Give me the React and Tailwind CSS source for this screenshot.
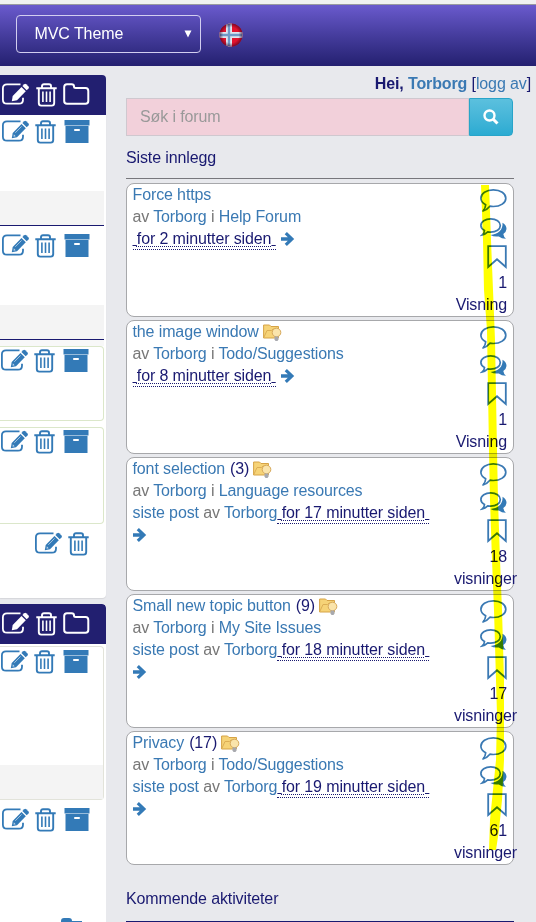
import React from "react";

const link = "text-[#3a79b3]";

function Edit({ className = "" }) {
  return (
    <svg className={"block shrink-0 " + className} width="28" height="24" viewBox="0 0 28 24" fill="none" stroke="currentColor">
      <path d="M18.500 1.300H5Q.9 1.300 .9 5.300V16.700Q.9 20.700 5 20.700H17Q21 20.700 21 16.700V14.800" strokeWidth="1.800" />
      <path d="M9.800 18.300L10.700 12.900L19.500 4L23.800 8.200L15 17.200Z" fill="currentColor" stroke="none" />
      <path d="M20.400 3L22.200 1.200Q23.200 .3 24.200 1.200L26.500 3.500Q27.400 4.500 26.500 5.500L24.700 7.200Z" fill="currentColor" stroke="none" />
      <path d="M13.300 12.800L19.600 6.400" stroke="white" strokeWidth=".8" opacity=".7" />
      <path d="M11.800 14.300L13.700 16.200L11.600 16.700Z" fill="white" stroke="none" opacity=".7" />
    </svg>
  );
}
function Trash() {
  return (
    <svg className="block shrink-0" width="21" height="24" viewBox="0 0 21 24" fill="none" stroke="currentColor">
      <path d="M.3 5.200H20.700M6 5V3Q6 1.200 8 1.200H13Q15 1.200 15 3V5M2.800 5V20Q2.800 22.600 5.300 22.600H15.700Q18.200 22.600 18.200 20V5" strokeWidth="1.900" />
      <path d="M6.900 8.500V19M10.500 8.500V19M14.100 8.500V19" strokeWidth="1.600" />
    </svg>
  );
}
function Folder() {
  return (
    <svg className="block shrink-0" width="27" height="24" viewBox="0 0 27 24" fill="none" stroke="currentColor" strokeWidth="2">
      <path d="M1.200 4Q1.200 1.200 4 1.200H8.500Q11 1.200 11 3.500Q11 5 12.800 5H22.500Q25.300 5 25.300 8V18Q25.300 20.800 22.500 20.800H4Q1.200 20.800 1.200 18Z" />
    </svg>
  );
}
function Archive() {
  return (
    <svg className="block shrink-0" width="26" height="24" viewBox="0 0 26 24">
      <path d="M.5 0H25.500V5.500H.5ZM1.500 6H24.500V23H1.500Z" fill="currentColor" />
      <rect x="10" y="9" width="6" height="1.900" rx=".9" fill="white" />
    </svg>
  );
}
function Tools({ shift = "pl-0.5", kind = "archive" }) {
  return (
    <div className={"flex h-6 text-[#337ab7] " + shift}>
      <Edit />
      <div className="ml-[5px]"><Trash /></div>
      {kind === "archive" && <div className="ml-2"><Archive /></div>}
    </div>
  );
}
function SectionHead() {
  return (
    <div className="flex h-10 rounded-tr bg-[#221f70] pl-0.5 pt-2 text-white">
      <Edit className="text-white" />
      <div className="ml-1.5"><Trash /></div>
      <div className="ml-[6px]"><Folder /></div>
    </div>
  );
}

function Comment() {
  return (
    <svg className="block" width="27" height="23" viewBox="0 0 27 23" fill="none" stroke="#3a79b3" strokeWidth="1.7">
      <path d="M13.300 .9C20.500 .9 25.800 4.500 25.800 9.200S20.500 17.500 13.300 17.500Q11.500 17.500 9.900 17.200Q7 20.800 3 22Q5.500 19.300 5.700 15.700C2.600 14.100 .9 11.900 .9 9.200C.9 4.500 6.300 .9 13.300 .9Z" strokeLinejoin="round" />
    </svg>
  );
}
function Comments() {
  return (
    <svg className="block" width="27" height="21" viewBox="0 0 27 21">
      <path d="M22.500 4.800Q26.600 7.300 26.500 11Q26.300 14 23.300 16Q23.600 18.700 26 20.700Q21.500 20.500 18.800 18.400Q14 19.200 10.500 16.900C18 16.500 23.200 12 22.500 4.800Z" fill="#337ab7" />
      <path d="M10.700 .9C16.200 .9 20.300 3.700 20.300 7.500S16.200 14.200 10.700 14.200Q9.200 14.200 7.800 13.900Q5.300 16.300 2.300 16.900Q4.400 15 4.500 12.500Q.9 10.500 .9 7.500C.9 3.700 5.300 .9 10.700 .9Z" fill="none" stroke="#3a79b3" strokeWidth="1.7" />
    </svg>
  );
}
function Bookmark() {
  return (
    <svg className="block" width="20" height="24" viewBox="0 0 20 24" fill="none" stroke="#3a79b3" strokeWidth="1.8">
      <path d="M1.200 1.200H18.800V22L10 14.300L1.200 22Z" />
    </svg>
  );
}
function Arrow() {
  return (
    <svg className="block" width="14" height="14" viewBox="0 0 14 14">
      <path d="M0 5.200H6.800L3.700 2.200L5.900 0L13.200 7L5.900 14L3.700 11.800L6.800 8.800H0Z" fill="#337ab7" />
    </svg>
  );
}
function Tip() {
  return (
    <svg className="ml-1 block" width="19" height="19" viewBox="0 0 19 19">
      <path d="M.6 15V2H6.500L8 3.500H15.500V15Z" fill="#f6d377" stroke="#d6a346" />
      <path d="M1 14L4 7.500H8.500L10 6H15.500" fill="none" stroke="#dcae55" />
      <circle cx="13.500" cy="9.500" r="4.300" fill="#fae4ab" stroke="#d6a85a" />
      <path d="M11.500 13.500H15.500V16.500L14.500 18H12.500L11.500 16.500Z" fill="#a8a9ae" />
    </svg>
  );
}

const posts = [
  { title: "Force https", forum: "Help Forum", time: "for 2 minutter siden", views: "1" },
  { title: "the image window", forum: "Todo/Suggestions", time: "for 8 minutter siden", views: "1", tip: true },
  { title: "font selection", n: "(3)", forum: "Language resources", time: "for 17 minutter siden", views: "18", tip: true, last: true },
  { title: "Small new topic button", n: "(9)", forum: "My Site Issues", time: "for 18 minutter siden", views: "17", tip: true, last: true },
  { title: "Privacy", n: "(17)", forum: "Todo/Suggestions", time: "for 19 minutter siden", views: "61", tip: true, last: true },
];

function Post({ p }) {
  return (
    <article className="flex h-[134px] w-[388px] justify-between rounded-lg border border-[#a7a8ab] bg-white pl-[5.500px] pr-[6px] leading-[22px]">
      <div className="whitespace-nowrap">
        <div className="flex h-[22px] items-center">
          <a className={link}>{p.title}</a>
          {p.n && <span className="ml-[5px]">{p.n}</span>}
          {p.tip && <Tip />}
        </div>
        <div className="h-[22px] text-[#777]">av <a className={link}>Torborg</a> i <a className={link}>{p.forum}</a></div>
        <div className="flex h-[22px]">
          {p.last && <span className="text-[#777]"><a className={link}>siste post</a> av <a className={link}>Torborg</a></span>}
          <span className="h-[22px] whitespace-pre border-b border-dotted border-[#191970]">
            <span className="underline"> </span>
            <span className="underline decoration-dotted decoration-1 underline-offset-2">{p.time}</span>
            <span className="underline"> </span>
          </span>
          {!p.last && <span className="ml-[5px] mt-1"><Arrow /></span>}
        </div>
        {p.last && <div className="pt-1"><Arrow /></div>}
      </div>
      <div className="flex w-[53px] flex-col items-end pt-[5px]">
        <Comment />
        <div className="mt-1.5"><Comments /></div>
        <div className="mt-1.5"><Bookmark /></div>
        <div className="mt-[3px] h-[22px]">{p.views}</div>
        <div className={p.views === "1" ? "" : "w-[53px] whitespace-nowrap"}>{p.views === "1" ? "Visning" : "visninger"}</div>
      </div>
    </article>
  );
}

function Forums() {
  return (
    <aside className="w-[106px] shrink-0">
      <section className="h-[523px] rounded-r bg-white shadow-[0_1px_1px_#d5d6da]">
        <SectionHead />
        <div className="w-[104px]">
          <div className="h-[76px] pt-[5px]"><Tools /></div>
          <div className="h-[35px] border-b border-[#191970] bg-[#f4f4f4]" />
          <div className="h-[79px] pt-2"><Tools /></div>
          <div className="h-[35px] border-b border-[#191970] bg-[#f4f4f4]" />
          <div className="h-1.5 bg-[#f8f8f8]" />
          <div className="h-[75px] rounded-r border border-l-0 border-[#dbe7ca] pt-[2px]"><Tools shift="pl-px" /></div>
          <div className="mt-1.5 h-[97px] rounded-r border border-l-0 border-[#dbe7ca] pt-[2px]"><Tools shift="pl-px" /></div>
          <div className="pt-2"><Tools shift="pl-[35px]" kind="short" /></div>
        </div>
      </section>
      <section className="mt-1.5 h-[318px] overflow-hidden rounded-tr bg-white">
        <SectionHead />
        <div className="w-[104px]">
          <div className="mt-0.5 flex h-[154px] flex-col justify-between rounded-r border border-l-0 border-[#e2e3da] pt-[3px]">
            <Tools shift="pl-px" />
            <div className="h-[34px] bg-[#f4f4f4]" />
          </div>
          <div className="pt-2"><Tools /></div>
          <div className="ml-[61px] mt-[86px] text-[#337ab7]">
            <svg className="block" width="22" height="20" viewBox="0 0 22 20"><path d="M0 3Q0 0 3 0H8Q11 0 11 3H21V20H0Z" fill="currentColor" /></svg>
          </div>
        </div>
      </section>
    </aside>
  );
}

export default function App() {
  return (
    <div className="relative h-[922px] w-[536px] overflow-hidden bg-[#e8e9ed] font-['Liberation_Sans',Arial,sans-serif] text-[16px] leading-[22px] tracking-[-0.12px] text-[#191970]">
      <div className="h-1 bg-[#f1f1f1]" />
      <header className="flex h-[62px] items-start border-t border-[#9999a0] bg-gradient-to-b from-[#6a5acd] to-[#242070] pl-4 pt-[10px] text-white">
        <div className="flex h-[38px] w-[185px] items-center justify-between rounded border border-[#d2cef0] pl-[17.500px] pr-[8px]">
          <span className="tracking-[-0.08px]">MVC Theme</span>
          <svg width="8" height="8" viewBox="0 0 8 8"><path d="M.5 .5H7.500L4 7.500Z" fill="white" /></svg>
        </div>
        <svg className="ml-[18px] mt-2" width="24" height="24" viewBox="0 0 24 24">
          <defs>
            <clipPath id="round"><circle cx="12" cy="12" r="11.500" /></clipPath>
            <radialGradient id="shade"><stop offset=".65" stopColor="#300020" stopOpacity="0" /><stop offset="1" stopColor="#300020" stopOpacity=".65" /></radialGradient>
          </defs>
          <g clipPath="url(#round)">
            <path d="M0 0H24V24H0Z" fill="#e3122d" />
            <path d="M0 12H24M10 0V24" stroke="#dfe5ef" strokeWidth="6" />
            <path d="M0 12H24M10 0V24" stroke="#6f9ac8" strokeWidth="2.400" />
            <circle cx="12" cy="12" r="12" fill="url(#shade)" />
          </g>
        </svg>
      </header>
      <div className="flex pt-[9px]">
        <Forums />
        <main className="ml-5 w-[410px]">
          <div className="h-[23px] pr-[5px] text-right leading-[18px]"><b>Hei, <a className={link}>Torborg</a></b> [<a className={link}>logg av</a>]</div>
          <div className="flex h-[38px] w-[387px]">
            <div className="flex flex-1 items-center border border-[#cfc8cf] bg-[#f2d0da] pl-[13px] text-[#999]">Søk i forum</div>
            <button className="flex w-11 items-center justify-center rounded-r border border-[#28a4c9] bg-gradient-to-b from-[#5bc0de] to-[#2aabd2]">
              <svg width="16" height="16" viewBox="0 0 16 16" fill="none" stroke="white"><circle cx="6.500" cy="6.500" r="5" strokeWidth="2.400" /><path d="M10 10L14.500 14.500" strokeWidth="3" /></svg>
            </button>
          </div>
          <h2 className="h-[43px] w-[388px] border-b border-[#77777c] pt-[11px]">Siste innlegg</h2>
          <div className="mt-1 flex flex-col gap-[3px]">
            {posts.map((p) => <Post key={p.title} p={p} />)}
          </div>
          <h2 className="mt-[22px] h-[35px] w-[388px] border-b border-[#191970] pt-px">Kommende aktiviteter</h2>
        </main>
      </div>
      <svg className="pointer-events-none absolute left-0 top-0 mix-blend-multiply" width="536" height="922" viewBox="0 0 536 922">
        <path d="M481 185H489L491 240L493 290L495 340L497 450L498 500L500 560L502 610L504 680V760L502 800L499 830L496 850H489L490 820L493 790L496 760L497 715L494 610L492 560L490 500L489 450L487 330L484 290L483 240Z" fill="#ff0" />
      </svg>
    </div>
  );
}
